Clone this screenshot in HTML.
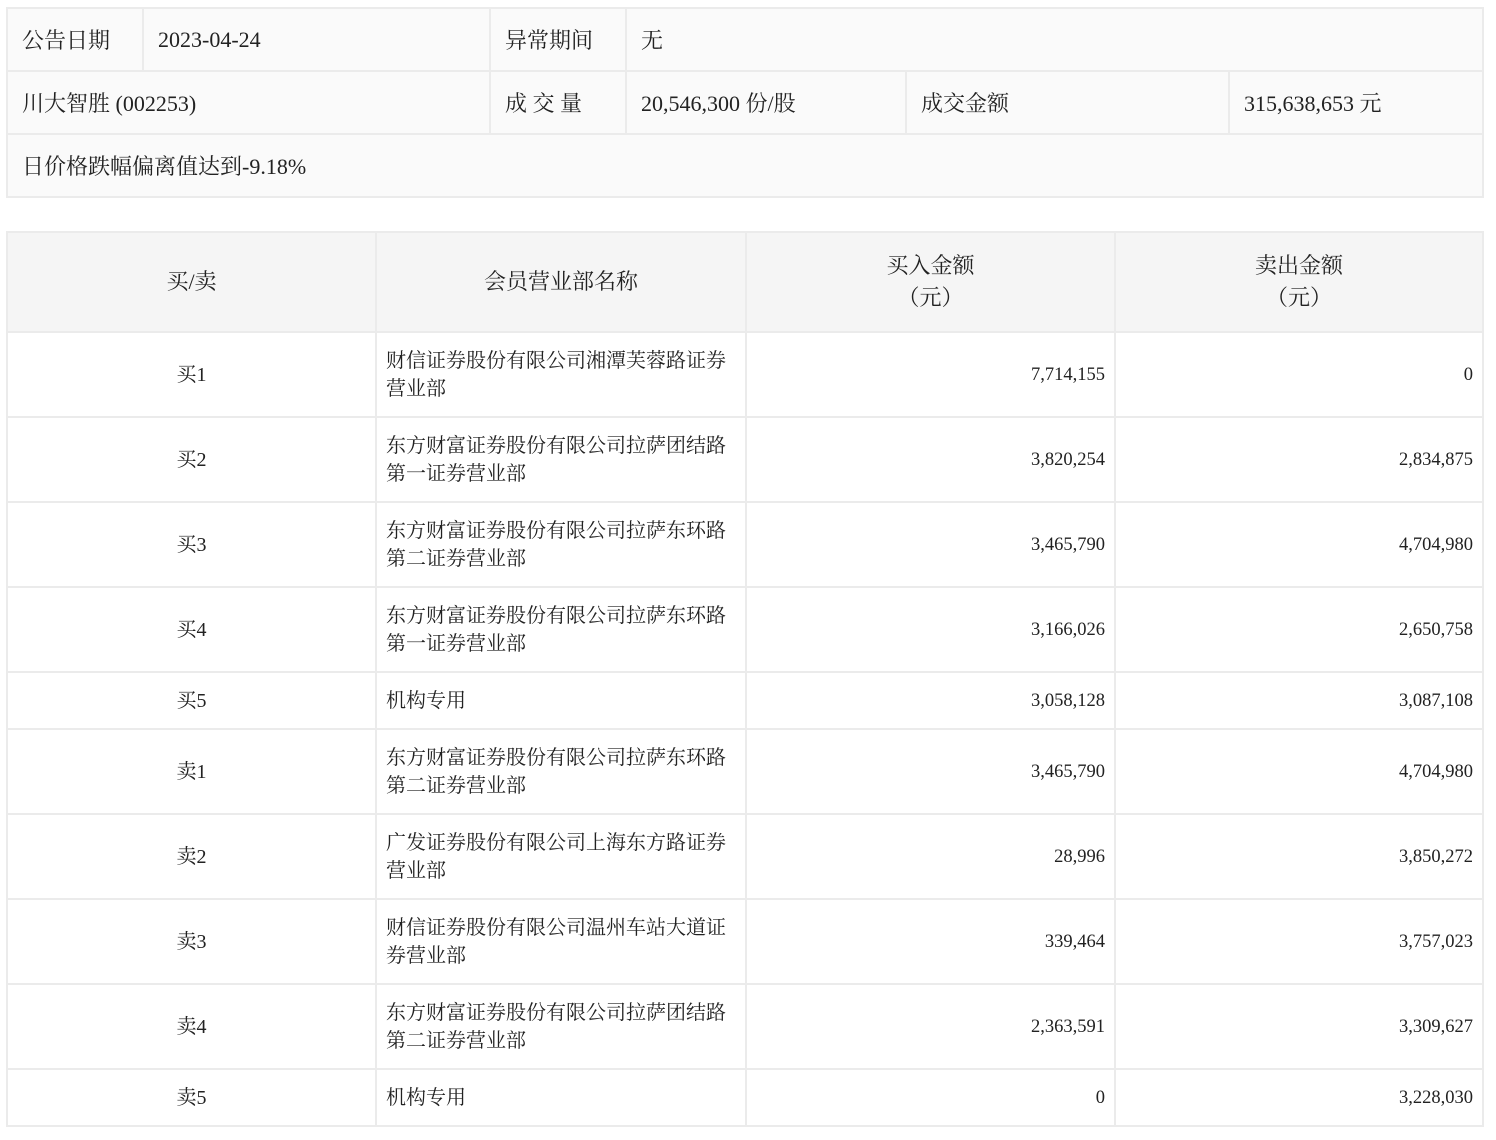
<!DOCTYPE html>
<html><head><meta charset="utf-8"><style>
body{margin:0;background:#fff;font-family:"Liberation Serif","Noto Serif CJK SC",serif;color:#222;}
table{border-collapse:collapse;position:absolute;left:6px;table-layout:fixed;width:1476px;}
td{border:2px solid #ebebeb;padding:0;}
#t1{top:7px;background:#fafafa;font-size:22px;}
#t1 td{height:61px;padding-left:14px;}
#t2{top:231px;font-size:20px;}
#t2 th{background:#f5f5f5;border:2px solid #ebebeb;font-weight:normal;font-size:22px;height:96px;line-height:32px;}
#t2 td{line-height:28px;}
.c{text-align:center;}
.n{padding-left:9px;}
.r{text-align:right;padding-right:9px;font-size:18.5px;}
tr.h{height:85px;}
tr.s{height:57px;}
</style></head><body>
<table id="t1">
<colgroup><col style="width:136px"><col style="width:347px"><col style="width:136px"><col style="width:280px"><col style="width:323px"><col style="width:254px"></colgroup>
<tr><td>公告日期</td><td>2023-04-24</td><td>异常期间</td><td colspan="3">无</td></tr>
<tr><td colspan="2">川大智胜 (002253)</td><td>成 交 量</td><td>20,546,300 份/股</td><td>成交金额</td><td>315,638,653 元</td></tr>
<tr><td colspan="6">日价格跌幅偏离值达到-9.18%</td></tr>
</table>
<table id="t2">
<colgroup><col style="width:369px"><col style="width:370px"><col style="width:369px"><col style="width:368px"></colgroup>
<tr><th>买/卖</th><th>会员营业部名称</th><th>买入金额<br>（元）</th><th>卖出金额<br>（元）</th></tr>
<tr class="h"><td class="c">买1</td><td class="n">财信证券股份有限公司湘潭芙蓉路证券<br>营业部</td><td class="r">7,714,155</td><td class="r">0</td></tr>
<tr class="h"><td class="c">买2</td><td class="n">东方财富证券股份有限公司拉萨团结路<br>第一证券营业部</td><td class="r">3,820,254</td><td class="r">2,834,875</td></tr>
<tr class="h"><td class="c">买3</td><td class="n">东方财富证券股份有限公司拉萨东环路<br>第二证券营业部</td><td class="r">3,465,790</td><td class="r">4,704,980</td></tr>
<tr class="h"><td class="c">买4</td><td class="n">东方财富证券股份有限公司拉萨东环路<br>第一证券营业部</td><td class="r">3,166,026</td><td class="r">2,650,758</td></tr>
<tr class="s"><td class="c">买5</td><td class="n">机构专用</td><td class="r">3,058,128</td><td class="r">3,087,108</td></tr>
<tr class="h"><td class="c">卖1</td><td class="n">东方财富证券股份有限公司拉萨东环路<br>第二证券营业部</td><td class="r">3,465,790</td><td class="r">4,704,980</td></tr>
<tr class="h"><td class="c">卖2</td><td class="n">广发证券股份有限公司上海东方路证券<br>营业部</td><td class="r">28,996</td><td class="r">3,850,272</td></tr>
<tr class="h"><td class="c">卖3</td><td class="n">财信证券股份有限公司温州车站大道证<br>券营业部</td><td class="r">339,464</td><td class="r">3,757,023</td></tr>
<tr class="h"><td class="c">卖4</td><td class="n">东方财富证券股份有限公司拉萨团结路<br>第二证券营业部</td><td class="r">2,363,591</td><td class="r">3,309,627</td></tr>
<tr class="s"><td class="c">卖5</td><td class="n">机构专用</td><td class="r">0</td><td class="r">3,228,030</td></tr>
</table>
</body></html>
